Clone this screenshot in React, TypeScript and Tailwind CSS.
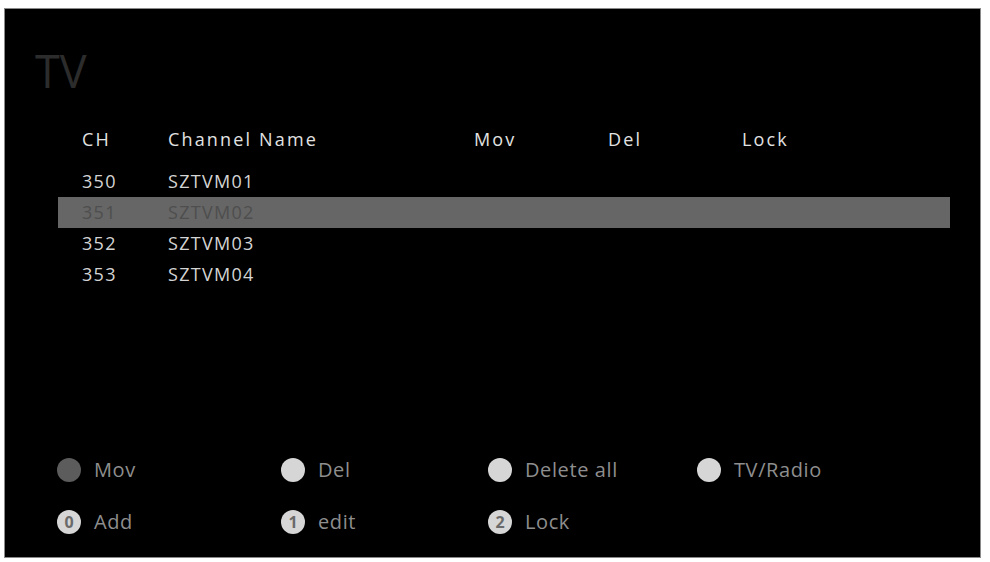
const channels = [
  { ch: "350", name: "SZTVM01" },
  { ch: "351", name: "SZTVM02" },
  { ch: "352", name: "SZTVM03" },
  { ch: "353", name: "SZTVM04" },
];

const selected = "351";

function Dot({ tone, label }: { tone: "dark" | "light"; label?: string }) {
  return (
    <span
      className={`flex h-[24px] w-[24px] shrink-0 items-center justify-center rounded-full text-[16px] font-bold leading-none text-[#6a6a6a] ${
        tone === "dark" ? "bg-[#5c5c5c]" : "bg-[#d6d6d6]"
      }`}
    >
      {label}
    </span>
  );
}

function LegendItem({ tone, label, text }: { tone: "dark" | "light"; label?: string; text: string }) {
  return (
    <div className="flex items-center gap-[13px]">
      <Dot tone={tone} label={label} />
      <span className="text-[20px] leading-none tracking-[0.03em] text-[#8e8e8e]">{text}</span>
    </div>
  );
}

export default function App() {
  return (
    <div className="h-[562px] w-[990px] bg-white pb-[4px] pl-[4px] pr-[9px] pt-[8px] font-['Open_Sans',sans-serif]">
      <div className="flex h-full flex-col border border-[#8a8a8a] bg-black">
        <div className="pl-[30px] pt-[39px] text-[45px] leading-none text-[#2c2c2c]">TV</div>

        {/* channel table */}
        <div className="ml-[53px] mt-[31px] w-[892px]">
          <div className="grid h-[31px] grid-cols-[86px_306px_134px_134px_1fr] items-center pl-[24px] text-[18px] tracking-[0.12em] text-[#e2e2e2]">
            <span>CH</span>
            <span>Channel Name</span>
            <span>Mov</span>
            <span>Del</span>
            <span>Lock</span>
          </div>
          <div className="mt-[11px] tracking-[0.08em]">
            {channels.map((c) => (
              <div
                key={c.ch}
                className={`grid h-[31px] grid-cols-[86px_1fr] items-center pl-[24px] text-[18px] ${
                  c.ch === selected ? "bg-[#666666] text-[#4e4e4e]" : "text-[#d4d4d4]"
                }`}
              >
                <span>{c.ch}</span>
                <span>{c.name}</span>
              </div>
            ))}
          </div>
        </div>

        {/* color key legend */}
        <div className="mt-auto mb-[23px] ml-[52px] flex flex-col gap-[28px]">
          <div className="grid grid-cols-[224px_207px_209px_1fr]">
            <LegendItem tone="dark" text="Mov" />
            <LegendItem tone="light" text="Del" />
            <LegendItem tone="light" text="Delete all" />
            <LegendItem tone="light" text="TV/Radio" />
          </div>
          <div className="grid grid-cols-[224px_207px_209px_1fr]">
            <LegendItem tone="light" label="0" text="Add" />
            <LegendItem tone="light" label="1" text="edit" />
            <LegendItem tone="light" label="2" text="Lock" />
          </div>
        </div>
      </div>
    </div>
  );
}
